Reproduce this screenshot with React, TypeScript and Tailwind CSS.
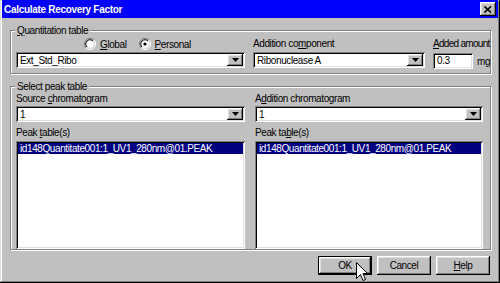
import React from 'react';

const raised =
  'bg-[#c0c0c0] shadow-[inset_-1px_-1px_0_#000,inset_1px_1px_0_#fff,inset_-2px_-2px_0_#808080,inset_2px_2px_0_#dfdfdf]';
const sunken =
  'bg-white shadow-[inset_1px_1px_0_#808080,inset_-1px_-1px_0_#fff,inset_2px_2px_0_#000,inset_-2px_-2px_0_#dfdfdf]';

function U({ children }: { children: React.ReactNode }) {
  return <span className="underline underline-offset-[1px]">{children}</span>;
}

function ArrowButton() {
  return (
    <div className={`${raised} w-[16px] h-[12px] flex items-center justify-center`}>
      <svg width="7" height="4" viewBox="0 0 7 4">
        <path d="M0 0h7L3.5 4z" fill="#000" />
      </svg>
    </div>
  );
}

function Combo({ value, className }: { value: string; className: string }) {
  return (
    <div className={`${sunken} ${className} h-[16px] flex items-center pl-[4px] pr-[2px]`}>
      <span className="flex-1 leading-none pt-[1px]">{value}</span>
      <ArrowButton />
    </div>
  );
}

function Radio({ checked }: { checked?: boolean }) {
  return (
    <svg width="12" height="12" viewBox="0 0 12 12">
      <path d="M10 2A5.5 5.5 0 0 0 2 10" stroke="#808080" fill="none" strokeWidth="1" />
      <circle cx="6" cy="6" r="4.5" fill="#fff" />
      <path d="M9 3A4.2 4.2 0 0 0 3 9" stroke="#000" fill="none" strokeWidth="1" />
      <path d="M2 10A5.5 5.5 0 0 0 10 2" stroke="#fff" fill="none" strokeWidth="1" />
      <path d="M3 9A4.2 4.2 0 0 0 9 3" stroke="#dfdfdf" fill="none" strokeWidth="1" />
      {checked && <circle cx="6" cy="6" r="1.6" fill="#000" />}
    </svg>
  );
}

function ListBox({ item, className }: { item: string; className: string }) {
  return (
    <div className={`${sunken} ${className} h-[108px] p-[2px]`}>
      <div className="h-[11px] bg-[#000080] text-white leading-[11px] pl-[2px] whitespace-nowrap overflow-hidden">
        {item}
      </div>
    </div>
  );
}

function Button({ children, isDefault }: { children: React.ReactNode; isDefault?: boolean }) {
  return (
    <div
      className={`w-[54px] h-[19px] flex items-center justify-center ${
        isDefault ? 'border border-black' : ''
      }`}
    >
      <div className={`${raised} w-full h-full flex items-center justify-center`}>{children}</div>
    </div>
  );
}

function GroupBox({
  label,
  className,
  children,
}: {
  label: React.ReactNode;
  className: string;
  children: React.ReactNode;
}) {
  return (
    <div
      className={`relative border border-[#808080] shadow-[1px_1px_0_#fff,inset_1px_1px_0_#fff] ${className}`}
    >
      <div className="absolute -top-[7px] left-[4px] px-[2px] bg-[#c0c0c0] leading-[13px]">{label}</div>
      {children}
    </div>
  );
}

export default function App() {
  const peak = 'id148Quantitate001:1_UV1_280nm@01.PEAK';
  return (
    <div className="relative w-[500px] h-[283px] bg-[#c0c0c0] flex flex-col font-['Liberation_Sans',Arial,sans-serif] text-[10px] tracking-[-0.4px] text-black shadow-[inset_-1px_-1px_0_#000,inset_1px_1px_0_#dfdfdf,inset_-2px_-2px_0_#808080,inset_2px_2px_0_#fff] px-[2px] overflow-hidden">
      {/* Title bar */}
      <div className="h-[18px] bg-[#0000ff] flex items-center pl-[2px] pr-[2px]">
        <span className="flex-1 font-bold text-white text-[10px] tracking-[-0.3px]">Calculate Recovery Factor</span>
        <div className={`${raised} w-[16px] h-[14px] flex items-center justify-center`}>
          <svg width="8" height="7" viewBox="0 0 8 7">
            <path d="M0.5 0.5L7 6.5M7 0.5L0.5 6.5" stroke="#000" strokeWidth="1.6" />
          </svg>
        </div>
      </div>

      {/* Quantitation table */}
      <GroupBox
        label={
          <>
            <U>Q</U>uantitation table
          </>
        }
        className="mt-[12px] ml-[8px] mr-[7px] h-[44px]"
      >
        <div className="flex gap-[8px] pl-[5px] pt-[6px]">
          <div className="flex flex-col w-[229px]">
            <div className="h-[14px] flex items-center pl-[68px]">
              <Radio />
              <span className="ml-[4px] mr-[12px]">
                <U>G</U>lobal
              </span>
              <Radio checked />
              <span className="ml-[4px]">
                <U>P</U>ersonal
              </span>
            </div>
            <Combo value="Ext_Std_Ribo" className="mt-[1px] w-[229px]" />
          </div>
          <div className="flex flex-col w-[172px]">
            <div className="h-[14px] leading-[14px]">
              Addition co<U>m</U>ponent
            </div>
            <Combo value="Ribonuclease A" className="mt-[1px] w-[172px]" />
          </div>
          <div className="flex flex-col">
            <div className="h-[14px] leading-[14px] whitespace-nowrap tracking-[-0.7px]">
              <U>A</U>dded amount
            </div>
            <div className="flex items-center mt-[1px]">
              <div className={`${sunken} w-[40px] h-[16px] pl-[4px] leading-[16px]`}>0.3</div>
              <span className="ml-[4px] pt-[2px]">mg</span>
            </div>
          </div>
        </div>
      </GroupBox>

      {/* Select peak table */}
      <GroupBox label="Select peak table" className="mt-[12px] ml-[8px] mr-[7px] h-[164px]">
        <div className="flex gap-[10px] pl-[5px] pt-[5px]">
          <div className="flex flex-col w-[229px]">
            <div className="h-[14px] leading-[14px]">
              Source <U>c</U>hromatogram
            </div>
            <Combo value="1" className="w-[229px]" />
            <div className="h-[14px] leading-[14px] mt-[4px]">
              Peak <U>t</U>able(s)
            </div>
            <ListBox item={peak} className="mt-[1px] w-[229px]" />
          </div>
          <div className="flex flex-col w-[228px]">
            <div className="h-[14px] leading-[14px]">
              A<U>d</U>dition chromatogram
            </div>
            <Combo value="1" className="w-[228px]" />
            <div className="h-[14px] leading-[14px] mt-[4px]">
              Peak ta<U>b</U>le(s)
            </div>
            <ListBox item={peak} className="mt-[1px] w-[228px]" />
          </div>
        </div>
      </GroupBox>

      {/* Buttons */}
      <div className="flex justify-end gap-[5px] mt-[6px] mr-[8px]">
        <Button isDefault>OK</Button>
        <Button>Cancel</Button>
        <Button>
          <span>
            <U>H</U>elp
          </span>
        </Button>
      </div>

      {/* Mouse cursor */}
      <svg className="absolute left-[356px] top-[262px]" width="12" height="20" viewBox="0 0 12 20">
        <path
          d="M0.5 0.5V16.5L4.5 12.5L7 18.5L9.5 17.5L7 11.5H11.5Z"
          fill="#fff"
          stroke="#000"
          strokeWidth="1"
        />
      </svg>
    </div>
  );
}
